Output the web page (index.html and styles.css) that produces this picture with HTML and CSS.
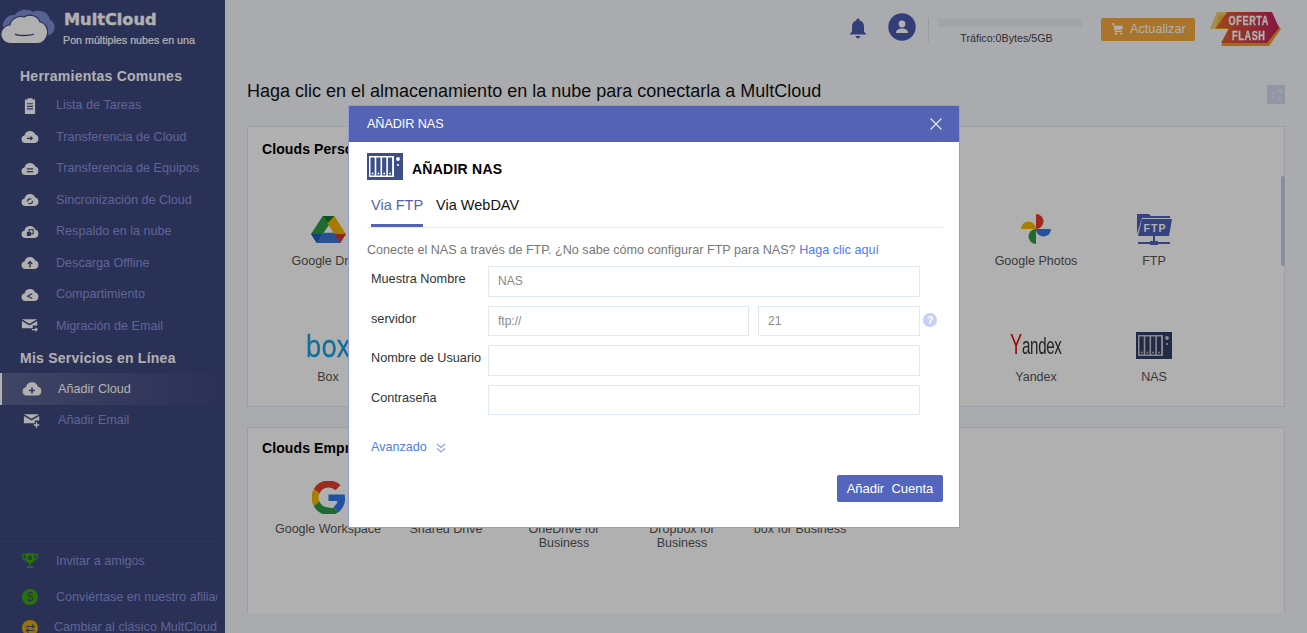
FILE: index.html
```html
<!DOCTYPE html>
<html lang="es">
<head>
<meta charset="utf-8">
<title>MultCloud</title>
<link rel="stylesheet" href="styles.css">
</head>
<body>
<svg class="defs" width="0" height="0" aria-hidden="true">
  <symbol id="cloud" viewBox="0 0 20 15"><path d="M4.600 14.600a4.200 4.200 0 0 1-.7-8.300A6.200 6.200 0 0 1 15.800 5.400a4.700 4.700 0 0 1-.4 9.200z" fill="currentColor"/></symbol>
  <symbol id="nas" viewBox="0 0 36 27"><rect width="36" height="27" fill="#3d4f86"/><rect x="2" y="3" width="25" height="21" fill="#fff"/><g fill="#3d4f86"><rect x="3.500" y="4.500" width="4.200" height="18"/><rect x="9.300" y="4.500" width="4.200" height="18"/><rect x="15.100" y="4.500" width="4.200" height="18"/><rect x="20.900" y="4.500" width="4.200" height="18"/></g><g fill="#fff"><circle cx="5.600" cy="20.500" r=".9"/><circle cx="11.400" cy="20.500" r=".9"/><circle cx="17.200" cy="20.500" r=".9"/><circle cx="23" cy="20.500" r=".9"/><circle cx="31" cy="6" r="1.900"/><circle cx="31" cy="12" r="1.100"/></g></symbol>
  <linearGradient id="flashfill" x1="0" x2="1" y1="0" y2="0"><stop offset="0" stop-color="#e2662a"/><stop offset="1" stop-color="#c3205f"/></linearGradient>
</svg>
<div class="app">
  <aside class="sidebar">
    <div class="brand">
      <svg class="brand-logo" viewBox="0 0 56 38"><path d="M3 20C2 12 8 6 15 7 18 2 28 0 33 4 39 1 49 4 50 12 56 14 56 24 50 27L30 22Z" fill="#7f8fd6"/><path d="M11 35.500C4 35.500 0 30 1 25 2 20 6 17 10 17 11 11 18 7 24 9 30 5 38 8 40 14 46 15 49 22 47 28 45 33 42 35.500 38 35.500Z" fill="#fff" stroke="#3e477e" stroke-width="1.200"/><path d="M15 26c2 2 14 2 19 0" fill="none" stroke="#3e477e" stroke-width="1.300"/></svg>
      <div class="brand-text">
        <div class="brand-name">MultCloud</div>
        <div class="brand-tag">Pon múltiples nubes en una</div>
      </div>
    </div>
    <div class="heading">Herramientas Comunes</div>
    <a class="item"><svg class="ic" viewBox="0 0 20 20"><path d="M4 3h3V1.500h6V3h3v17H4z" fill="currentColor"/><path d="M6.500 8h7M6.500 11h7M6.500 14h7" stroke="#3e477e" stroke-width="1.300"/></svg><span>Lista de Tareas</span></a>
    <a class="item"><svg class="ic" viewBox="0 0 20 15"><use href="#cloud"/><path d="M6.500 9.500h6M10.500 7.500l2 2-2 2" fill="none" stroke="#3e477e" stroke-width="1.300"/></svg><span>Transferencia de Cloud</span></a>
    <a class="item"><svg class="ic" viewBox="0 0 20 15"><use href="#cloud"/><path d="M6.500 8h7M6.500 11h7" stroke="#3e477e" stroke-width="1.300"/></svg><span>Transferencia de Equipos</span></a>
    <a class="item"><svg class="ic" viewBox="0 0 20 15"><use href="#cloud"/><circle cx="10" cy="9.500" r="2.700" fill="none" stroke="#3e477e" stroke-width="1.300" stroke-dasharray="6 2"/></svg><span>Sincronización de Cloud</span></a>
    <a class="item"><svg class="ic" viewBox="0 0 20 15"><use href="#cloud"/><rect x="9" y="5.500" width="4.500" height="4.500" fill="none" stroke="#3e477e" stroke-width="1.200"/><rect x="6.500" y="8" width="4.500" height="4.500" fill="#3e477e"/></svg><span>Respaldo en la nube</span></a>
    <a class="item"><svg class="ic" viewBox="0 0 20 15"><use href="#cloud"/><path d="M10 13V7M7.500 9L10 6.500 12.500 9" fill="none" stroke="#3e477e" stroke-width="1.500"/></svg><span>Descarga Offline</span></a>
    <a class="item"><svg class="ic" viewBox="0 0 20 15"><use href="#cloud"/><path d="M12.500 6.500L7.500 9.500 12.500 12" fill="none" stroke="#3e477e" stroke-width="1.300"/></svg><span>Compartimiento</span></a>
    <a class="item"><svg class="ic" viewBox="0 0 20 16"><path d="M1 1h17l-8.500 5z" fill="currentColor"/><path d="M1 3l8.500 5L18 3v5h-5v3H1z" fill="currentColor"/><path d="M12 12.500h6M16 10.500l2 2-2 2" fill="none" stroke="currentColor" stroke-width="1.300"/></svg><span>Migración de Email</span></a>
    <div class="heading heading-second">Mis Servicios en Línea</div>
    <a class="item item-on"><svg class="ic" viewBox="0 0 20 15"><use href="#cloud"/><path d="M10 6.500v6M7 9.500h6" stroke="#4b5282" stroke-width="1.600"/></svg><span>Añadir Cloud</span></a>
    <a class="item item-sub"><svg class="ic" viewBox="0 0 20 16"><path d="M1 1h17l-8.500 5z" fill="currentColor"/><path d="M1 3l8.500 5L18 3v5h-5v3H1z" fill="currentColor"/><path d="M15 10v6M12 13h6" stroke="currentColor" stroke-width="1.500"/></svg><span>Añadir Email</span></a>
    <div class="side-foot">
      <a class="item"><svg class="ic" viewBox="0 0 20 18"><path d="M5 1h10v6a5 5 0 0 1-10 0z" fill="#38a80e"/><path d="M5 2.500H1.500c0 4 1.500 5.500 4 6M15 2.500h3.500c0 4-1.500 5.500-4 6" fill="none" stroke="#38a80e" stroke-width="1.300"/><path d="M10 11v4M6.500 16.500h7" stroke="#38a80e" stroke-width="1.500"/><path d="M10 2.500l1 2.200 2.300.2-1.700 1.500.5 2.300-2.100-1.200-2.100 1.200.5-2.300-1.700-1.500 2.300-.2z" fill="#3e477e"/></svg><span>Invitar a amigos</span></a>
      <a class="item item-aff"><span class="dot dot-green">$</span><span>Conviértase en nuestro afiliado</span></a>
      <a class="item item-classic"><span class="dot dot-gold">⇄</span><span>Cambiar al clásico MultCloud</span></a>
    </div>
  </aside>

  <main class="main">
    <header class="topbar">
      <svg class="bell" viewBox="0 0 18 22"><path d="M9 1.500a1.500 1.500 0 0 1 1.500 1.700C13.500 4 15 6.500 15 9.500v5l2.500 3h-17L3 14.500v-5c0-3 1.500-5.500 4.500-6.300A1.500 1.500 0 0 1 9 1.500zM6.500 19h5c-.5 1.500-1.500 2.300-2.500 2.300S7 20.500 6.500 19z" fill="#4a5ab0"/></svg>
      <svg class="avatar" viewBox="0 0 28 28"><circle cx="14" cy="14" r="13.700" fill="#4a5ab0"/><circle cx="14" cy="11" r="3.400" fill="#fff"/><path d="M8 20c0-3 2.500-4.500 6-4.500s6 1.500 6 4.500z" fill="#fff"/></svg>
      <div class="traffic">
        <div class="traffic-bar"></div>
        <div class="traffic-text">Tráfico:0Bytes/5GB</div>
      </div>
      <button class="upgrade"><svg viewBox="0 0 14 14" class="cart"><path d="M.5 1.500h2.300l2 8h7" fill="none" stroke="#fff" stroke-width="1.300"/><path d="M3.500 3.500H13l-1.300 4.300H4.500z" fill="#fff"/><circle cx="5.500" cy="12" r="1.200" fill="#fff"/><circle cx="11" cy="12" r="1.200" fill="#fff"/></svg>Actualizar</button>
      <div class="flash">
        <svg class="flash-bg" viewBox="0 0 72 36"><path d="M10 3h52l10 14-12 17H12l8-17H6z" fill="#f09a1e"/><path d="M8 0h14L6 17H1z" fill="#f3bd4a" opacity=".75"/><path d="M18 0h45l7 16-12 15H12l8-15H7z" fill="url(#flashfill)"/></svg>
        <div class="flash-text">OFERTA<br>FLASH</div>
      </div>
    </header>
    <div class="title-row">
      <h1 class="title">Haga clic en el almacenamiento en la nube para conectarla a MultCloud</h1>
      <div class="sort">↕<span class="sort-az">a<br>z</span></div>
    </div>
    <div class="scroller">
      <section class="card card-personal">
        <h2 class="card-title">Clouds Personales</h2>
        <div class="tiles tiles-personal">
          <div class="tile"><div class="tile-ic"><svg width="35" height="29" viewBox="0 0 36 32" preserveAspectRatio="none"><path d="M12 1h12l-6 10.500z" fill="#0f7a3a"/><path d="M12 1L0 21l6 10 13-21z" fill="#2e9a45"/><path d="M24 1l12 20H24L17 9z" fill="#f0b400"/><path d="M6 31h24l6-10H24v-1.500H13z" fill="#3a74d8"/><path d="M0 21h12L6 31z" fill="#1f5fc0"/><path d="M24 21h12l-6 10z" fill="#d33a2c"/></svg></div><div class="tile-name">Google Drive</div></div>
          <div class="tile"></div><div class="tile"></div><div class="tile"></div><div class="tile"></div><div class="tile"></div>
          <div class="tile"><div class="tile-ic"><svg width="32" height="32" viewBox="0 0 32 32"><path d="M16 16V1a7.500 7.500 0 0 1 0 15z" fill="#e53c2e"/><path d="M16 16h15a7.500 7.500 0 0 1-15 0z" fill="#2f78ea"/><path d="M16 16v15a7.500 7.500 0 0 1 0-15z" fill="#2e9a45"/><path d="M16 16H1a7.500 7.500 0 0 1 15 0z" fill="#f5b800"/></svg></div><div class="tile-name">Google Photos</div></div>
          <div class="tile"><div class="tile-ic"><svg width="36" height="33" viewBox="0 0 36 33"><path d="M1 1h12l2 2h19v2H6L1 21z" fill="#4a62bd"/><path d="M6 6h30l-3 17H2z" fill="#4a62bd"/><path d="M18 23v6M2 30h32" stroke="#4a62bd" stroke-width="2"/><rect x="14" y="28" width="8" height="4" fill="#4a62bd"/><text x="19" y="19" class="ftp-mark">FTP</text></svg></div><div class="tile-name">FTP</div></div>
          <div class="tile"><div class="tile-ic"><span class="box-logo">box</span></div><div class="tile-name">Box</div></div>
          <div class="tile"></div><div class="tile"></div><div class="tile"></div><div class="tile"></div><div class="tile"></div>
          <div class="tile"><div class="tile-ic"><span class="yandex-logo"><span class="yandex-y">Y</span>andex</span></div><div class="tile-name">Yandex</div></div>
          <div class="tile"><div class="tile-ic"><svg class="nas-dark" width="36" height="27"><use href="#nas"/></svg></div><div class="tile-name">NAS</div></div>
        </div>
      </section>
      <section class="card card-business">
        <h2 class="card-title">Clouds Empresariales</h2>
        <div class="tiles tiles-business">
          <div class="tile"><div class="tile-ic"><svg width="33" height="33" viewBox="0 0 33 33"><path d="M16.500 6.500a10 10 0 0 1 7 2.700l5-5A17 17 0 0 0 1.800 8l5.700 4.500a10 10 0 0 1 9-6z" fill="#e53c2e"/><path d="M6.500 16.500a10 10 0 0 1 1-4L1.800 8a17 17 0 0 0 0 17l5.700-4.500a10 10 0 0 1-1-4z" fill="#f5b800"/><path d="M16.500 26.500a10 10 0 0 1-9-6L1.800 25a17 17 0 0 0 25 6l-5.400-4.300a10 10 0 0 1-4.900-.2z" fill="#2e9a45"/><path d="M32.500 13.500H16.500v6.500h9a8 8 0 0 1-3.600 5.700l-.5 1 5.400 4.300A17 17 0 0 0 32.500 13.500z" fill="#2f78ea"/></svg></div><div class="tile-name">Google Workspace</div></div>
          <div class="tile"><div class="tile-ic"></div><div class="tile-name">Shared Drive</div></div>
          <div class="tile"><div class="tile-ic"></div><div class="tile-name">OneDrive for Business</div></div>
          <div class="tile"><div class="tile-ic"></div><div class="tile-name">Dropbox for Business</div></div>
          <div class="tile"><div class="tile-ic"></div><div class="tile-name">box for Business</div></div>
        </div>
      </section>
      <div class="scroll-thumb"></div>
    </div>
  </main>
</div>

<div class="overlay"></div>

<div class="modal">
  <div class="modal-head">
    <span>AÑADIR NAS</span>
    <svg class="close" viewBox="0 0 12 12"><path d="M.5.500l11 11M11.500.500l-11 11" stroke="#e4e6f4" stroke-width="1.200"/></svg>
  </div>
  <div class="modal-body">
    <div class="modal-title">
      <svg width="36" height="27"><use href="#nas"/></svg>
      <span class="modal-title-text">AÑADIR NAS</span>
    </div>
    <div class="tabs">
      <a class="tab tab-on">Via FTP</a>
      <a class="tab">Via WebDAV</a>
    </div>
    <p class="hint">Conecte el NAS a través de FTP. ¿No sabe cómo configurar FTP para NAS? <a class="link">Haga clic aquí</a></p>
    <div class="form">
      <div class="row"><label class="lbl">Muestra Nombre</label><div class="fields"><input class="inp" placeholder="NAS"></div></div>
      <div class="row"><label class="lbl">servidor</label><div class="fields"><input class="inp" placeholder="ftp://"><input class="inp inp-port" placeholder="21"><span class="help">?</span></div></div>
      <div class="row"><label class="lbl">Nombre de Usuario</label><div class="fields"><input class="inp"></div></div>
      <div class="row"><label class="lbl">Contraseña</label><div class="fields"><input class="inp" type="password"></div></div>
    </div>
    <div class="advanced"><a class="link">Avanzado</a><svg class="chev" viewBox="0 0 10 10"><path d="M1 1l4 3.500L9 1M1 5.500L5 9l4-3.500" fill="none" stroke="#8fa3ee" stroke-width="1.300"/></svg></div>
    <div class="modal-foot"><button class="primary">Añadir&nbsp;&nbsp;Cuenta</button></div>
  </div>
</div>
</body>
</html>
```
FILE: styles.css
```css
* { box-sizing: border-box; }
html, body { margin: 0; height: 100%; overflow: hidden; }
body { font-family: "Liberation Sans", Arial, sans-serif; color: #333; background: #f5f8fe; }
.defs { position: absolute; }
.app { display: flex; height: 633px; }

/* Sidebar */
.sidebar { width: 225px; flex: none; display: flex; flex-direction: column; background: #3e477e; overflow: hidden; }
.brand { display: flex; height: 62.500px; flex: none; padding-top: 8px; }
.brand-logo { width: 56px; height: 38px; flex: none; }
.brand-text { margin-left: 8px; }
.brand-name { font-family: "DejaVu Sans", sans-serif; font-weight: 700; font-size: 16.200px; line-height: 22px; color: #fff; margin-top: 1px; -webkit-text-stroke: .4px #fff; }
.brand-tag { font-size: 10.700px; line-height: 14px; margin-top: 2px; margin-left: -1px; color: #fff; -webkit-text-stroke: .2px #fff; white-space: nowrap; }
.heading { height: 27px; flex: none; line-height: 27px; padding-left: 20px; font-size: 14px; font-weight: 700; color: #fff; letter-spacing: .25px; }
.heading-second { height: 31.500px; line-height: 32px; }
.item { display: flex; align-items: center; height: 31.500px; flex: none; padding-left: 56px; position: relative; font-size: 12.600px; color: #8a92da; white-space: nowrap; }
.ic { position: absolute; left: 21px; top: 7px; width: 18px; height: 17px; color: #fff; }
.item-on { color: #fff; background: linear-gradient(90deg, rgba(255,255,255,.16), rgba(255,255,255,0)); border-left: 2px solid #fff; }
.item-on .ic { left: 20px; width: 20px; }
.item-sub { padding-left: 58px; }
.item-sub .ic { left: 23px; }
.side-foot { margin-top: auto; height: 92px; padding-top: 3px; margin-right: 8px; border-top: 1px solid #454e8a; overflow: hidden; }
.item-aff { margin-top: 4.500px; }
.item-classic { margin-top: -1px; padding-left: 54px; }
.dot { position: absolute; left: 22px; top: 8px; width: 16px; height: 16px; border-radius: 50%; font-size: 12px; line-height: 16px; text-align: center; color: #3e477e; }
.dot-green { background: #38a80e; }
.dot-gold { background: #e6a50e; }

/* Main */
.main { flex: 1; min-width: 0; padding: 0 22px; display: flex; flex-direction: column; }
.topbar { height: 79px; flex: none; display: flex; align-items: flex-start; margin-right: 3px; justify-content: flex-end; }
.bell { width: 18px; height: 22px; margin-top: 17px; }
.avatar { width: 28px; height: 28px; margin: 13px 0 0 21px; }
.traffic { width: 154px; height: 24px; margin: 18px 0 0 12px; border-left: 1px solid #dfe1e6; padding-left: 9px; }
.traffic-bar { height: 9px; width: 144px; background: #eceef1; }
.traffic-text { font-size: 10.700px; line-height: 14px; margin-top: 4px; padding-right: 7px; text-align: center; color: #444; }
.upgrade { display: flex; align-items: center; gap: 6px; width: 94px; height: 23px; margin: 18px 0 0 19px; padding: 0 0 2px 10px; border: 0; border-radius: 2px; background: #f5a93f; color: #fff; font: 12.700px "Liberation Sans", Arial, sans-serif; }
.cart { width: 13px; height: 14px; flex: none; }
.flash { display: grid; width: 72px; height: 36px; margin: 12px 1px 0 14px; }
.flash-bg, .flash-text { grid-area: 1 / 1; }
.flash-bg { width: 72px; height: 36px; }
.flash-text { padding-left: 10px; text-align: center; font-size: 12px; line-height: 15px; font-weight: 700; color: #fff; letter-spacing: .8px; transform: scaleX(.76); margin-top: 2px; -webkit-text-stroke: .3px #fff; }
.title-row { display: flex; justify-content: space-between; height: 24px; flex: none; }
.title { margin: 0; font-size: 18px; font-weight: 400; line-height: 24px; color: #111; white-space: nowrap; }
.sort { display: flex; align-items: center; justify-content: center; width: 18px; height: 19px; margin-top: 6px; gap: 1px; background: #d3daf0; color: #f3f5fb; font-size: 12px; line-height: 1; }
.sort-az { font-size: 8px; line-height: 8px; text-align: center; }

.scroller { position: relative; margin-top: 23px; height: 487px; flex: none; overflow: hidden; display: flex; flex-direction: column; gap: 20px; }
.card { flex: none; background: #fff; border: 1px solid #e2e6ef; padding-left: 14px; }
.card-personal { height: 281px; padding-top: 12px; }
.card-business { height: 300px; padding-top: 10px; }
.card-title { margin: 0; font-size: 14px; line-height: 20px; font-weight: 700; color: #000; letter-spacing: .1px; }
.tiles { display: grid; grid-template-columns: repeat(8, 118px); grid-auto-rows: 82px; row-gap: 34px; margin-left: 7px; }
.tiles-personal { margin-top: 50px; }
.tiles-business { margin-top: 19px; }
.tile { text-align: center; }
.tile-ic { height: 40px; display: flex; align-items: center; justify-content: center; margin-bottom: 5px; }
.tile-name { font-size: 12.500px; line-height: 14px; color: #555; padding: 0 5px; }
.ftp-mark { font: 700 10.500px "Liberation Sans", Arial, sans-serif; fill: #fff; text-anchor: middle; letter-spacing: 1px; }
.box-logo { display: inline-block; font-family: "Open Sans", sans-serif; font-size: 31px; font-weight: 400; line-height: 40px; color: #1a9fe0; transform: scaleX(.82); -webkit-text-stroke: .5px #1a9fe0; }
.yandex-logo { display: inline-block; font-size: 24px; line-height: 40px; color: #333; transform: scaleX(.63); white-space: nowrap; letter-spacing: -.5px; }
.yandex-y { color: #e01010; font-size: 29px; }
.nas-dark { filter: brightness(.78); }
.scroll-thumb { position: absolute; right: 0; top: 50px; width: 4px; height: 90px; border-radius: 2px; background: #c5cdea; }

/* Overlay + modal */
.overlay { position: fixed; inset: 0; background: rgba(0,0,0,.31); }
.modal { position: fixed; left: 348px; top: 105px; width: 612px; height: 423px; background: #fff; border: 1px solid #8f9bdc; }
.modal-head { display: flex; align-items: center; justify-content: space-between; height: 36px; padding: 0 17px 0 18px; background: #5563b5; color: #fff; font-size: 12.700px; letter-spacing: -.1px; }
.close { width: 12px; height: 12px; }
.modal-body { padding: 11px 16px 0 18px; }
.modal-title { display: flex; align-items: center; gap: 9px; height: 27px; font-size: 14px; font-weight: 700; color: #000; letter-spacing: .25px; }
.modal-title-text { margin-top: 4px; }
.tabs { display: flex; gap: 13px; margin-top: 10px; padding-left: 4px; border-bottom: 1px solid #e6e8f0; font-size: 14.500px; }
.tab { padding: 5px 0 9px; line-height: 20px; border-bottom: 3px solid transparent; color: #111; }
.tab-on { color: #5563b5; border-bottom-color: #5563b5; }
.hint { margin: 12px 0 6px; font-size: 12.600px; line-height: 20px; color: #777; white-space: nowrap; }
.link { color: #4f7bf0; }
.form { display: flex; flex-direction: column; gap: 9px; }
.row { display: flex; height: 30.500px; padding-left: 4px; }
.lbl { width: 117px; flex: none; padding-top: 4px; font-size: 12.700px; line-height: 18px; color: #333; white-space: nowrap; }
.fields { position: relative; display: flex; gap: 9px; width: 432px; }
.inp { flex: 1 1 0; min-width: 0; height: 100%; padding: 0 9px; border: 1px solid #e1e8f5; outline: 0; font: 12px "Liberation Sans", Arial, sans-serif; color: #555; }
.inp::placeholder { color: #888; opacity: 1; }
.inp-port { flex: none; width: 162px; }
.help { position: absolute; left: 435px; top: 7px; width: 14px; height: 14px; border-radius: 50%; background: #c5d0f5; color: #fff; font-size: 11px; font-weight: 700; line-height: 14px; text-align: center; }
.advanced { display: flex; align-items: center; gap: 9px; margin-top: 22px; padding-left: 4px; height: 20px; font-size: 12.600px; line-height: 20px; }
.chev { width: 10px; height: 10px; margin-top: 2px; }
.modal-foot { display: flex; justify-content: flex-end; margin-top: 18px; }
.primary { width: 106px; height: 27px; padding: 0; border: 0; border-radius: 2px; background: #5365bd; color: #fff; font: 13px "Liberation Sans", Arial, sans-serif; }
```
